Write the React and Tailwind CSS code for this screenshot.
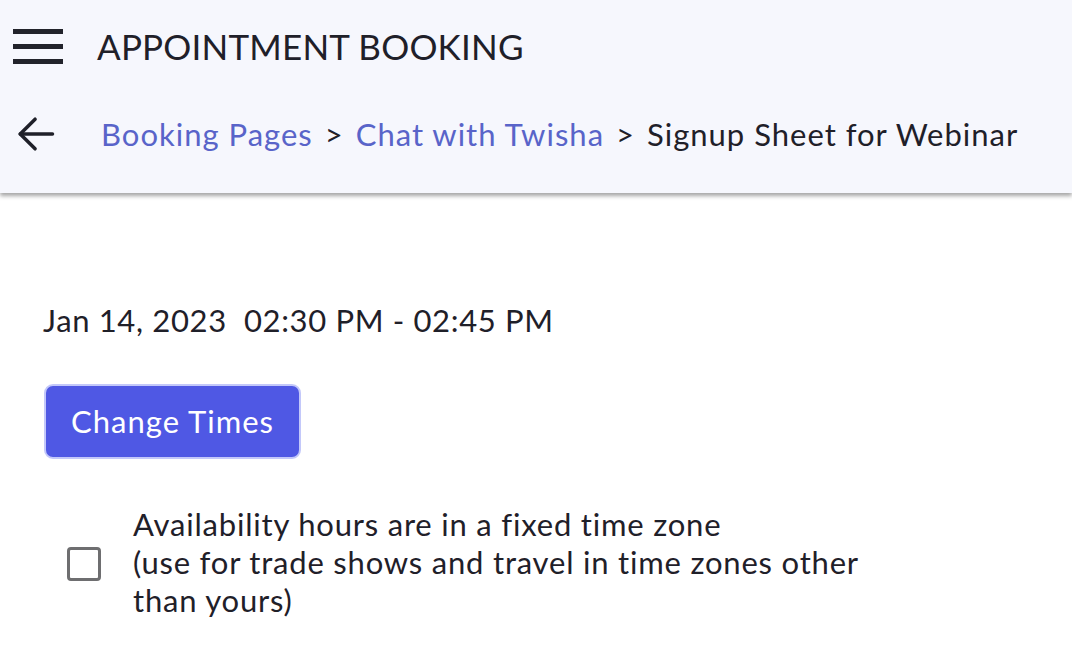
import { useState } from 'react';

export default function App() {
  const [fixed, setFixed] = useState(false);

  return (
    <div className="min-h-screen bg-white text-[#1f2029] font-[Lato,_'Noto_Sans',_sans-serif]">
      <header className="bg-[#f6f7fd] h-[193px] shadow-[0_3px_4px_rgba(0,0,0,0.35)] relative z-10">
        <div className="flex items-center h-[92px] pl-[13px]">
          <button className="flex flex-col gap-[10px] w-[50px]">
            <span className="block h-[5px] bg-[#22232b]" />
            <span className="block h-[5px] bg-[#22232b]" />
            <span className="block h-[5px] bg-[#22232b]" />
          </button>
          <h1 className="ml-[34px] text-[35px] tracking-[0.2px] leading-none">APPOINTMENT BOOKING</h1>
        </div>
        <div className="flex items-center h-[84px] pl-[14px]">
          <svg width="44" height="44" viewBox="0 0 24 24" fill="none" stroke="#1f2029" strokeWidth="1.9" strokeLinecap="round" strokeLinejoin="round">
            <path d="M21 12H3.4" />
            <path d="M11.5 3.9L3.4 12l8.1 8.1" />
          </svg>
          <nav className="ml-[43px] flex items-center text-[31px] tracking-[1px] leading-none">
            <a className="text-[#5964c9]">Booking Pages</a>
            <span className="mx-[12px]">&gt;</span>
            <a className="text-[#5964c9]">Chat with Twisha</a>
            <span className="mx-[12px]">&gt;</span>
            <span>Signup Sheet for Webinar</span>
          </nav>
        </div>
      </header>

      <main className="px-[43px] pt-[112px]">
        <p className="text-[31px] tracking-[0.65px] leading-none">Jan 14, 2023&nbsp; 02:30 PM - 02:45 PM</p>
        <button className="mt-[48px] ml-[1px] h-[75px] w-[257px] rounded-[9px] bg-[#4f58e4] border-2 border-[#c3c8fa] text-white text-[31px] tracking-[1px]">
          Change Times
        </button>
        <label className="mt-[46px] flex items-center cursor-pointer">
          <input
            type="checkbox"
            checked={fixed}
            onChange={(e) => setFixed(e.target.checked)}
            className="sr-only"
          />
          <span className="ml-[24px] mt-[4px] w-[34px] h-[34px] shrink-0 rounded-[4px] border-[3px] border-[#6e6e70] bg-white" />
          <span className="ml-[32px] text-[31px] tracking-[0.8px] leading-[38px] w-[760px]">
            Availability hours are in a fixed time zone<br />
            (use for trade shows and travel in time zones other than yours)
          </span>
        </label>
      </main>
    </div>
  );
}
